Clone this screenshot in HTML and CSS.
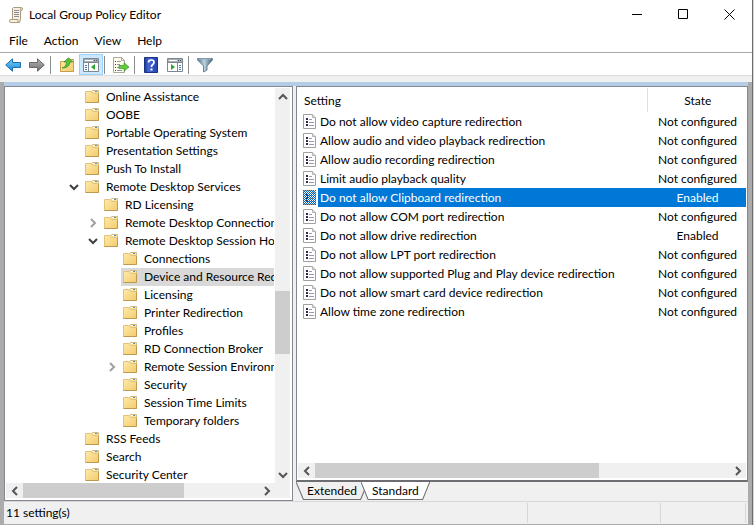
FILE: index.html
```html
<!DOCTYPE html>
<html lang="en">
<head>
    <meta charset="utf-8">
    <title>Local Group Policy Editor</title>
    <link rel="stylesheet" href="styles.css">
</head>

<body>
    <!-- shared icons -->
    <svg class="sprite" aria-hidden="true">
        <defs>
            <linearGradient id="folder-fill" x1="0" y1="0" x2="1" y2="1">
                <stop offset="0" stop-color="#ffebaa"/>
                <stop offset="1" stop-color="#f2cb6c"/>
            </linearGradient>
            <linearGradient id="blue-fill" x1="0" y1="0" x2="0" y2="1">
                <stop offset="0" stop-color="#7fd0f8"/>
                <stop offset="1" stop-color="#1389d6"/>
            </linearGradient>
            <linearGradient id="gray-fill" x1="0" y1="0" x2="0" y2="1">
                <stop offset="0" stop-color="#b5b5b5"/>
                <stop offset="1" stop-color="#707070"/>
            </linearGradient>
            <linearGradient id="help-fill" x1="0" y1="0" x2="1" y2="0">
                <stop offset="0" stop-color="#1d3590"/>
                <stop offset="0.3" stop-color="#4468d4"/>
                <stop offset="1" stop-color="#2443ae"/>
            </linearGradient>
            <linearGradient id="steel-fill" x1="0" y1="0" x2="1" y2="0">
                <stop offset="0" stop-color="#54768c"/>
                <stop offset="0.45" stop-color="#bcd3e0"/>
                <stop offset="1" stop-color="#3e5d72"/>
            </linearGradient>
            <pattern id="dither" width="2" height="2" patternUnits="userSpaceOnUse">
                <rect width="1" height="1" fill="#0066bb"/>
                <rect x="1" y="1" width="1" height="1" fill="#0066bb"/>
            </pattern>
        </defs>
        <symbol id="folder" viewBox="0 0 14 13">
            <path d="M6.500 3.500V1.500L7.500 .5H13.500V4.500H6.500Z" fill="#f8e3a4" stroke="#dbb974"/>
            <path d="M8 1.500H10" stroke="#fff"/>
            <path d="M10 1.500H12" stroke="#3f94d8"/>
            <path d="M.5 1.500H5.500L7.500 3.500H13.500V12.500H.5Z" fill="url(#folder-fill)" stroke="#e3c27a"/>
            <path d="M.5 12.500H13.500V4" fill="none" stroke="#bf994f"/>
        </symbol>
        <symbol id="policy" viewBox="0 0 13 15">
            <path d="M.5 .5H9.500L12.500 3.500V14.500H.5Z" fill="#fff" stroke="#a0a0a0"/>
            <path d="M9.500 .5V3.500H12.500" fill="#e4e4e4" stroke="#b4b4b4"/>
            <path d="M3 4H5V6H3ZM3 7H5V9H3ZM3 10H5V12H3Z" fill="#2e2a4e"/>
            <path d="M6 5.500H9M6 8.500H11M6 11.500H11" stroke="#9d97b5"/>
        </symbol>
        <symbol id="arrow" viewBox="0 0 16 14">
            <path d="M.7 7L7.500 .8V4.500H15.500V9.500H7.500V13.200Z"/>
        </symbol>
        <symbol id="arrow-right" viewBox="0 0 16 14">
            <path d="M15.300 7L8.500 .8V4.500H.5V9.500H8.500V13.200Z"/>
        </symbol>
        <symbol id="pane" viewBox="0 0 16 14">
            <path d="M.5 .5H15.500V13.500H.5Z" fill="#fff" stroke="#7d8791"/>
            <path d="M1 1H15V4H1Z" fill="#a5adb5"/>
            <path d="M2 2.500H10" stroke="#fff"/>
            <path d="M11 2.500H12M13 2.500H14" stroke="#4d565e"/>
            <path d="M1 4.500H15" stroke="#7d8791"/>
            <path d="M5.500 5V13" stroke="#7d8791"/>
            <path d="M2 7.500H4M2 9.500H4M2 11.500H4" stroke="#4179b8"/>
            <path d="M12 6V12L8 9Z" fill="#2fa52c"/>
        </symbol>
        <symbol id="pane-right" viewBox="0 0 16 14">
            <path d="M.5 .5H15.500V13.500H.5Z" fill="#fff" stroke="#7d8791"/>
            <path d="M1 1H15V4H1Z" fill="#a5adb5"/>
            <path d="M2 2.500H10" stroke="#fff"/>
            <path d="M11 2.500H12M13 2.500H14" stroke="#4d565e"/>
            <path d="M1 4.500H15" stroke="#7d8791"/>
            <path d="M10.500 5V13" stroke="#7d8791"/>
            <path d="M12 7.500H14M12 9.500H14M12 11.500H14" stroke="#4179b8"/>
            <path d="M4 6V12L8 9Z" fill="#2fa52c"/>
        </symbol>
        <symbol id="chev-down" viewBox="0 0 10 10"><path d="M1 3L5 7L9 3"/></symbol>
        <symbol id="chev-up" viewBox="0 0 10 10"><path d="M1 7L5 3L9 7"/></symbol>
        <symbol id="chev-left" viewBox="0 0 10 10"><path d="M7 1L3 5L7 9"/></symbol>
        <symbol id="chev-right" viewBox="0 0 10 10"><path d="M3 1L7 5L3 9"/></symbol>
    </svg>

    <div class="window">
        <header class="titlebar">
            <svg class="app-icon" width="14" height="16" viewBox="0 0 14 16">
                <path d="M3.500 1.500Q4 .5 5 .5H12.500Q13.500 .5 13.500 2Q13.500 3.500 11.500 3.500V12L10.500 15.500H1.500Q.5 15.500 .5 14Q.5 12.500 2 12.500H3.500Z" fill="#f7f1dc" stroke="#a79b80"/>
                <path d="M2 12.500H9Q8.500 15 10 15.500" fill="none" stroke="#a79b80"/>
                <path d="M11.500 3.500Q11 2 12 1" fill="none" stroke="#a79b80"/>
                <path d="M5 3.500H10M5 5.500H10M5 7.500H10M5 9.500H10" stroke="#8c8a9c"/>
            </svg>
            <h1 class="title">Local Group Policy Editor</h1>
            <button class="win-btn" aria-label="Minimize"><svg width="11" height="11"><path d="M0 5.500H10"/></svg></button>
            <button class="win-btn" aria-label="Maximize"><svg width="11" height="11"><path d="M.5 .5H9.500V9.500H.5Z"/></svg></button>
            <button class="win-btn" aria-label="Close"><svg width="11" height="11"><path d="M.5 .5L10.500 10.500M10.500 .5L.5 10.500"/></svg></button>
        </header>

        <nav class="menubar">
            <button>File</button>
            <button>Action</button>
            <button>View</button>
            <button>Help</button>
        </nav>

        <div class="toolbar">
            <button aria-label="Back"><svg class="back" width="16" height="14"><use href="#arrow"/></svg></button>
            <button aria-label="Forward"><svg class="forward" width="16" height="14"><use href="#arrow-right"/></svg></button>
            <span class="sep"></span>
            <button aria-label="Up one level">
                <svg width="15" height="16" viewBox="0 0 15 16">
                    <path d="M.5 4.500H6L7.500 2.500H13.500V14.500H.5Z" fill="url(#folder-fill)" stroke="#c99f4c"/>
                    <path d="M9.500 4.500H12.500" stroke="#3f94d8"/>
                    <path d="M2 11Q6.500 10 6.500 5H4L8.500 .8L12.500 5H10Q9.500 11 2 11Z" fill="#58c236" stroke="#2f8a22" stroke-width=".7"/>
                </svg>
            </button>
            <button class="on" aria-label="Show/Hide Console Tree" aria-pressed="true"><svg width="16" height="14"><use href="#pane"/></svg></button>
            <span class="sep"></span>
            <button aria-label="Export List">
                <svg width="17" height="16" viewBox="0 0 17 16">
                    <path d="M.5 .5H8.500L11.500 3.500V15.500H.5Z" fill="#fffdf0" stroke="#aaa79b"/>
                    <path d="M8.500 .5V3.500H11.500" fill="none" stroke="#aaa79b"/>
                    <path d="M2 4.500H3M2 7.500H3M2 10.500H3M2 13.500H3" stroke="#444"/>
                    <path d="M4 4.500H8M4 7.500H7M4 10.500H7M4 13.500H9" stroke="#9790a8"/>
                    <path d="M6 8.500H11V5.800L16 10L11 14.200V11.500H6Z" fill="#62cc3e" stroke="#38972a" stroke-width=".7"/>
                </svg>
            </button>
            <span class="sep"></span>
            <button aria-label="Help">
                <svg width="14" height="16" viewBox="0 0 14 16">
                    <path d="M.5 .5H13.500V15.500H.5Z" fill="url(#help-fill)" stroke="#1d327f"/>
                    <path d="M4.500 5.500Q4.500 3 7.300 3Q10 3 10 5.300Q10 6.700 8.500 7.800Q7.500 8.500 7.500 10" fill="none" stroke="#fff" stroke-width="1.700"/>
                    <path d="M6.500 11.500H8.500V13.500H6.500Z" fill="#fff"/>
                </svg>
            </button>
            <button aria-label="Show/Hide Action Pane"><svg width="16" height="14"><use href="#pane-right"/></svg></button>
            <span class="sep"></span>
            <button aria-label="Filter">
                <svg width="16" height="16" viewBox="0 0 16 16">
                    <path d="M.6 1.500H15.400V3L10 9V13L6.500 15V9L.6 3Z" fill="url(#steel-fill)" stroke="#4d6c80" stroke-width=".8"/>
                    <path d="M1.500 2H14.500" stroke="#9db8c8"/>
                </svg>
            </button>
        </div>

        <main class="panes">
            <section class="tree-pane">
                <div class="tree-view">
                    <ul class="tree">
                        <li><a href="#"><svg><use href="#folder"/></svg>Online Assistance</a></li>
                        <li><a href="#"><svg><use href="#folder"/></svg>OOBE</a></li>
                        <li><a href="#"><svg><use href="#folder"/></svg>Portable Operating System</a></li>
                        <li><a href="#"><svg><use href="#folder"/></svg>Presentation Settings</a></li>
                        <li><a href="#"><svg><use href="#folder"/></svg>Push To Install</a></li>
                        <li>
                            <button class="toggle open" aria-label="Collapse"><svg><use href="#chev-down"/></svg></button>
                            <a href="#"><svg><use href="#folder"/></svg>Remote Desktop Services</a>
                            <ul>
                                <li><a href="#"><svg><use href="#folder"/></svg>RD Licensing</a></li>
                                <li>
                                    <button class="toggle" aria-label="Expand"><svg><use href="#chev-right"/></svg></button>
                                    <a href="#"><svg><use href="#folder"/></svg>Remote Desktop Connection</a>
                                </li>
                                <li>
                                    <button class="toggle open" aria-label="Collapse"><svg><use href="#chev-down"/></svg></button>
                                    <a href="#"><svg><use href="#folder"/></svg>Remote Desktop Session Host</a>
                                    <ul>
                                        <li><a href="#"><svg><use href="#folder"/></svg>Connections</a></li>
                                        <li><a href="#" class="current"><svg><use href="#folder"/></svg>Device and Resource Redirection</a></li>
                                        <li><a href="#"><svg><use href="#folder"/></svg>Licensing</a></li>
                                        <li><a href="#"><svg><use href="#folder"/></svg>Printer Redirection</a></li>
                                        <li><a href="#"><svg><use href="#folder"/></svg>Profiles</a></li>
                                        <li><a href="#"><svg><use href="#folder"/></svg>RD Connection Broker</a></li>
                                        <li>
                                            <button class="toggle" aria-label="Expand"><svg><use href="#chev-right"/></svg></button>
                                            <a href="#"><svg><use href="#folder"/></svg>Remote Session Environment</a>
                                        </li>
                                        <li><a href="#"><svg><use href="#folder"/></svg>Security</a></li>
                                        <li><a href="#"><svg><use href="#folder"/></svg>Session Time Limits</a></li>
                                        <li><a href="#"><svg><use href="#folder"/></svg>Temporary folders</a></li>
                                    </ul>
                                </li>
                            </ul>
                        </li>
                        <li><a href="#"><svg><use href="#folder"/></svg>RSS Feeds</a></li>
                        <li><a href="#"><svg><use href="#folder"/></svg>Search</a></li>
                        <li><a href="#"><svg><use href="#folder"/></svg>Security Center</a></li>
                    </ul>
                </div>
                <div class="vscroll">
                    <button aria-label="Scroll up"><svg><use href="#chev-up"/></svg></button>
                    <span></span>
                    <div class="thumb"></div>
                    <span></span>
                    <button aria-label="Scroll down"><svg><use href="#chev-down"/></svg></button>
                </div>
                <div class="hscroll tree-hscroll">
                    <button aria-label="Scroll left"><svg><use href="#chev-left"/></svg></button>
                    <div class="thumb"></div>
                    <span></span>
                    <button aria-label="Scroll right"><svg><use href="#chev-right"/></svg></button>
                </div>
                <div class="corner"></div>
            </section>

            <section class="detail">
                <div class="list-pane">
                    <table class="settings">
                        <thead>
                            <tr><th colspan="2">Setting</th><th class="state">State</th></tr>
                        </thead>
                        <tbody>
                            <tr><td class="icon"><svg><use href="#policy"/></svg></td><td>Do not allow video capture redirection</td><td class="state">Not configured</td></tr>
                            <tr><td class="icon"><svg><use href="#policy"/></svg></td><td>Allow audio and video playback redirection</td><td class="state">Not configured</td></tr>
                            <tr><td class="icon"><svg><use href="#policy"/></svg></td><td>Allow audio recording redirection</td><td class="state">Not configured</td></tr>
                            <tr><td class="icon"><svg><use href="#policy"/></svg></td><td>Limit audio playback quality</td><td class="state">Not configured</td></tr>
                            <tr class="selected"><td class="icon"><svg><use href="#policy"/><rect width="13" height="15" fill="url(#dither)"/></svg></td><td>Do not allow Clipboard redirection</td><td class="state">Enabled</td></tr>
                            <tr><td class="icon"><svg><use href="#policy"/></svg></td><td>Do not allow COM port redirection</td><td class="state">Not configured</td></tr>
                            <tr><td class="icon"><svg><use href="#policy"/></svg></td><td>Do not allow drive redirection</td><td class="state">Enabled</td></tr>
                            <tr><td class="icon"><svg><use href="#policy"/></svg></td><td>Do not allow LPT port redirection</td><td class="state">Not configured</td></tr>
                            <tr><td class="icon"><svg><use href="#policy"/></svg></td><td>Do not allow supported Plug and Play device redirection</td><td class="state">Not configured</td></tr>
                            <tr><td class="icon"><svg><use href="#policy"/></svg></td><td>Do not allow smart card device redirection</td><td class="state">Not configured</td></tr>
                            <tr><td class="icon"><svg><use href="#policy"/></svg></td><td>Allow time zone redirection</td><td class="state">Not configured</td></tr>
                        </tbody>
                    </table>
                    <div class="hscroll list-hscroll">
                        <button aria-label="Scroll left"><svg><use href="#chev-left"/></svg></button>
                        <div class="thumb"></div>
                        <span></span>
                        <button aria-label="Scroll right"><svg><use href="#chev-right"/></svg></button>
                    </div>
                </div>
                <div class="tabs">
                    <button class="tab">
                        <svg viewBox="0 0 68 18" preserveAspectRatio="none"><path d="M0 0L7 17.500H61L68 0"/></svg>
                        <span>Extended</span>
                    </button>
                    <button class="tab active">
                        <svg viewBox="0 0 68 18" preserveAspectRatio="none"><path d="M0 0L7 17.500H61L68 0"/></svg>
                        <span>Standard</span>
                    </button>
                </div>
            </section>
        </main>

        <footer class="statusbar">
            <span class="status-text">11 setting(s)</span>
            <span class="status-cell"></span>
            <span class="status-cell small"></span>
        </footer>
    </div>
</body>
</html>
```
FILE: styles.css
```css
* {
    box-sizing: border-box;
}
body {
    font-family: "Segoe UI", Lato, "Open Sans", sans-serif;
    font-size: 12px;
    margin: 0;
    color: #000;
    background-color: #d2d4d8;
}
button {
    font: inherit;
    color: inherit;
    margin: 0;
    padding: 0;
    border: none;
    background: none;
}
a {
    color: inherit;
    text-decoration: none;
}
ul {
    list-style: none;
    margin: 0;
    padding: 0;
}
svg {
    display: block;
    flex: none;
}
.sprite {
    position: absolute;
    width: 0;
    height: 0;
}
.window {
    display: flex;
    flex-direction: column;
    height: 100vh;
    margin-right: 1px;
    border-right: 1px solid #6e6e72;
    background-color: #fff;
}

/* title and menu */
.titlebar {
    display: flex;
    align-items: center;
    height: 29px;
    padding-left: 9px;
}
.title {
    flex: 1;
    margin: 0 0 0 6px;
    font-size: 12px;
    font-weight: normal;
}
.win-btn {
    display: flex;
    align-items: center;
    justify-content: center;
    width: 46px;
    height: 29px;
}
.win-btn svg {
    fill: none;
    stroke: #000;
}
.menubar {
    display: flex;
    gap: 16px;
    height: 24px;
    padding-left: 9px;
    border-bottom: 1px solid #a9a9a9;
}

/* toolbar */
.toolbar {
    display: flex;
    height: 23px;
    padding: 1px 0 0 1px;
    border-bottom: 1px solid #dcdcdc;
}
.toolbar button {
    display: flex;
    align-items: center;
    justify-content: center;
    width: 24px;
}
.toolbar .on {
    background-color: #cce8ff;
    border: 1px solid #99d1ff;
}
.sep {
    width: 6px;
    padding-left: 1px;
}
.sep::before {
    content: "";
    display: block;
    width: 1px;
    height: 18px;
    margin-top: 2px;
    background-color: #8c8c8c;
}
.back {
    fill: url(#blue-fill);
    stroke: #1b6fae;
}
.forward {
    fill: url(#gray-fill);
    stroke: #6a6a6a;
}

/* panes */
.panes {
    display: flex;
    flex: 1;
    gap: 3px;
    min-height: 0;
    margin-top: 6px;
    padding-top: 4px;
    border: solid #ababab;
    border-width: 0 4px;
    background-color: #f0f0f0;
    box-shadow: 0 -6px #f0f0f0, inset 0 4px #b4cde6;
}
.tree-pane {
    display: grid;
    grid-template-columns: 1fr 16px;
    grid-template-rows: 1fr 16px;
    width: 289px;
    padding: 1px;
    border: 1px solid #828790;
    background-color: #fff;
}
.tree-view {
    margin-right: 1px;
    overflow: hidden;
}
.tree {
    padding-left: 63px;
}
.tree ul {
    flex-basis: 100%;
    margin-left: -14px;
    padding-left: 19px;
}
.tree li {
    display: flex;
    flex-wrap: wrap;
    padding-left: 14px;
}
.tree a {
    display: flex;
    align-items: center;
    gap: 7px;
    flex: 1;
    height: 18px;
    padding: 0 0 2px 2px;
    white-space: nowrap;
}
.tree a svg {
    width: 14px;
    height: 13px;
}
.tree .current {
    background-color: #d9d9d9;
}
.toggle {
    display: flex;
    align-items: center;
    width: 14px;
    height: 18px;
    margin-left: -14px;
}
.toggle svg {
    width: 10px;
    height: 10px;
    fill: none;
    stroke: #a0a0a0;
    stroke-width: 2;
}
.toggle.open svg {
    stroke: #404040;
}

/* scrollbars */
.vscroll,
.hscroll {
    display: grid;
    background-color: #f0f0f0;
}
.vscroll {
    grid-template-rows: 17px 186fr 63fr 112fr 17px;
    margin-right: 1px;
}
.hscroll {
    height: 15px;
}
.tree-hscroll {
    grid-template-columns: 17px 160fr 74fr 17px;
}
.list-hscroll {
    grid-template-columns: 17px 285fr 130fr 17px;
}
.vscroll button,
.hscroll button {
    display: flex;
    align-items: center;
    justify-content: center;
}
.vscroll svg,
.hscroll svg {
    width: 10px;
    height: 10px;
    fill: none;
    stroke: #555;
    stroke-width: 2;
}
.thumb {
    background-color: #cdcdcd;
}
.corner {
    height: 15px;
    margin-right: 1px;
    background-color: #f0f0f0;
}

/* settings list */
.detail {
    display: flex;
    flex-direction: column;
    flex: 1;
    min-width: 0;
}
.list-pane {
    display: flex;
    flex-direction: column;
    justify-content: space-between;
    flex: 1;
    padding: 1px 1px 2px;
    border: 1px solid #828790;
    border-bottom: 2px solid #6d6d72;
    background-color: #fff;
}
.settings {
    width: 100%;
    border-collapse: collapse;
    white-space: nowrap;
}
.settings th {
    height: 24px;
    padding: 0 0 0 6px;
    font-weight: normal;
    text-align: left;
}
.settings td {
    height: 19px;
    padding: 0 0 0 2px;
    line-height: 16px;
}
.settings .icon {
    width: 20px;
    padding-left: 5px;
}
.icon svg {
    width: 13px;
    height: 15px;
}
.settings .state {
    width: 99px;
    padding: 0 0 0 2px;
    text-align: center;
}
.settings th.state {
    border-left: 1px solid #e0e0e0;
}
.selected td:not(.icon) {
    color: #fff;
    background-color: #0078d7;
}

/* view tabs */
.tabs {
    display: flex;
    height: 19px;
}
.tab {
    position: relative;
    height: 18px;
    padding: 0 11px;
    line-height: 18px;
}
.tab + .tab {
    margin-left: -7px;
}
.tab svg {
    position: absolute;
    inset: 0;
    width: 100%;
    height: 100%;
    fill: #f0f0f0;
    stroke: #6d6d72;
}
.tab.active svg {
    fill: #fff;
}
.tab span {
    position: relative;
}

/* status bar */
.statusbar {
    display: flex;
    height: 24px;
    padding: 2px 2px 1px;
    border: solid #ababab;
    border-width: 0 4px 1px;
    background-color: #f0f0f0;
    box-shadow: inset 0 1px #d7d7d7;
}
.status-text {
    flex: 1;
    line-height: 20px;
}
.status-cell {
    width: 133px;
    border-left: 1px solid #d7d7d7;
}
.status-cell.small {
    width: 86px;
    border-right: 1px solid #d7d7d7;
}
```
